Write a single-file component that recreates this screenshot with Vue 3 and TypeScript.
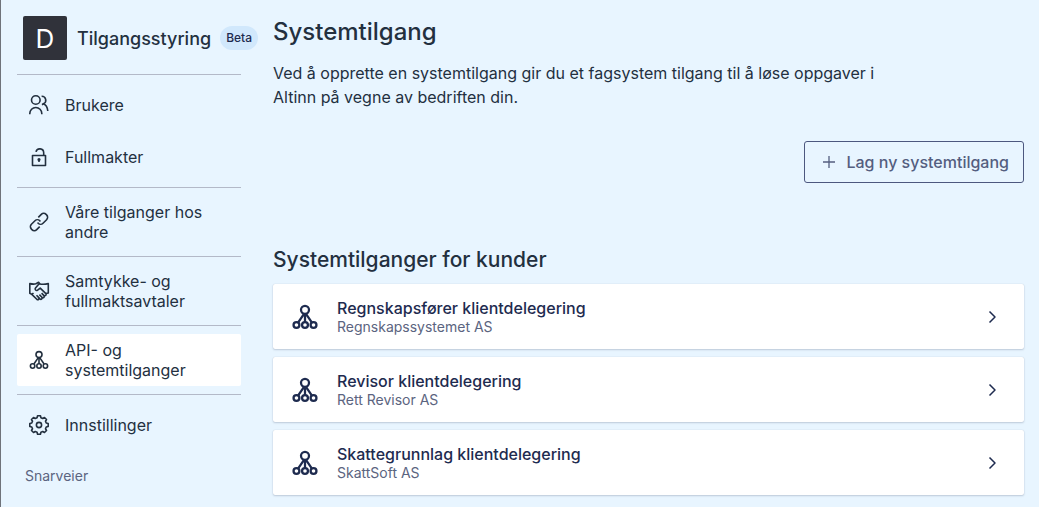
<script setup lang="ts">
interface NavItem {
  label: string
  icon: string
  active?: boolean
}

interface SystemAccess {
  name: string
  vendor: string
}

const navGroups: NavItem[][] = [
  [
    { label: 'Brukere', icon: 'people' },
    { label: 'Fullmakter', icon: 'lock' },
  ],
  [{ label: 'Våre tilganger hos andre', icon: 'link' }],
  [{ label: 'Samtykke- og fullmaktsavtaler', icon: 'handshake' }],
  [{ label: 'API- og systemtilganger', icon: 'system', active: true }],
  [{ label: 'Innstillinger', icon: 'cog' }],
]

const systems: SystemAccess[] = [
  { name: 'Regnskapsfører klientdelegering', vendor: 'Regnskapssystemet AS' },
  { name: 'Revisor klientdelegering', vendor: 'Rett Revisor AS' },
  { name: 'Skattegrunnlag klientdelegering', vendor: 'SkattSoft AS' },
]

// Outline of a gear with eight teeth, centred in a 24 by 24 box
function gearPath(): string {
  const points: string[] = []
  for (let tooth = 0; tooth < 8; tooth++) {
    const steps: [number, number][] = [
      [-15, 7.5],
      [-9, 9.3],
      [9, 9.3],
      [15, 7.5],
    ]
    for (const [offset, radius] of steps) {
      const angle = ((tooth * 45 + offset) * Math.PI) / 180
      points.push(`${(12 + radius * Math.sin(angle)).toFixed(2)} ${(12 - radius * Math.cos(angle)).toFixed(2)}`)
    }
  }
  return `M${points.join('L')}Z`
}

const gear = gearPath()
</script>

<template>
  <div class="page">
    <aside class="sidebar">
      <header class="brand">
        <span class="logo" aria-hidden="true">D</span>
        <span class="brand-name">Tilgangsstyring</span>
        <span class="badge">Beta</span>
      </header>
      <nav aria-label="Tilgangsstyring">
        <ul v-for="(group, index) in navGroups" :key="index" class="group">
          <li v-for="item in group" :key="item.label">
            <a href="#" class="nav-link" :class="{ active: item.active }" :aria-current="item.active ? 'page' : undefined">
              <svg class="icon" viewBox="0 0 24 24" aria-hidden="true">
                <g v-if="item.icon === 'people'">
                  <circle cx="8.8" cy="7" r="4.3" />
                  <path d="M2.8 21.3v-.8a6 6 0 0 1 12 0v.8" />
                  <path d="M14.6 3.2a4 4 0 0 1 1.900 7.600c2.400 1 3.900 3.300 4.300 7.200" />
                  <path d="M16.500 10.800l-1.500.9" />
                </g>
                <g v-else-if="item.icon === 'lock'">
                  <path d="M5.500 10.500h13v10h-13z" />
                  <path d="M9 6.900a3.900 3.900 0 0 1 7.700.8v2.800" />
                  <circle class="solid" cx="12" cy="14.500" r=".8" />
                  <path d="M12 14.500v2.500" />
                </g>
                <g v-else-if="item.icon === 'link'">
                  <path d="M11.300 7.400l3-3a3.400 3.400 0 0 1 4.800 0l.5.500a3.400 3.400 0 0 1 0 4.800l-3.600 3.600a3.400 3.400 0 0 1-4.800 0l-.6-.7" />
                  <path d="M12.700 16.600l-3 3a3.400 3.400 0 0 1-4.800 0l-.5-.5a3.400 3.400 0 0 1 0-4.800l3.600-3.600a3.400 3.400 0 0 1 4.800 0l.6.700" />
                </g>
                <g v-else-if="item.icon === 'handshake'">
                  <path d="M9 4.800c-1.800.5-4 .3-6.200-.2v9.600l2 1.200 5 4.900c1.400 1 2.900-.3 2-1.700l-2.300-2.400" />
                  <path d="M11.800 18.800l1.100 1.200c1.400.9 2.900-.4 2-1.800l-2.500-2.600" />
                  <path d="M15 18.400c1.500.9 2.900-.4 2-1.800l-2.400-2.500" />
                  <path d="M17 16.600c1.500.6 2.700-.7 1.900-2l-5.700-5.500-2.600 2.100c-1.500 1-3.200-.7-2.100-2.200l3.600-4.300c2.900.8 6 .7 9.200-.1v9.300l-2.400.7" />
                  <path d="M4.800 15.400l1.700-1.400M12.900 5l-1.300-1.700L9 4.800" />
                </g>
                <g v-else-if="item.icon === 'system'">
                  <circle cx="12" cy="6.600" r="3" />
                  <circle cx="5.600" cy="18" r="2.200" />
                  <circle cx="12" cy="18" r="2.200" />
                  <circle cx="18.400" cy="18" r="2.200" />
                  <path d="M12 9.600V16M11.300 9.600L6.900 16M12.700 9.600l4.400 6.400" />
                </g>
                <g v-else>
                  <path :d="gear" />
                  <circle cx="12" cy="12" r="2.600" />
                </g>
              </svg>
              <span>{{ item.label }}</span>
            </a>
          </li>
        </ul>
      </nav>
      <h2 class="shortcuts">Snarveier</h2>
    </aside>

    <main class="content">
      <h1>Systemtilgang</h1>
      <p class="intro">
        Ved å opprette en systemtilgang gir du et fagsystem tilgang til å løse oppgaver i Altinn på vegne av
        bedriften din.
      </p>
      <div class="actions">
        <button type="button" class="create">
          <svg class="plus" viewBox="0 0 18 18" aria-hidden="true"><path d="M9 3v12M3 9h12" /></svg>
          Lag ny systemtilgang
        </button>
      </div>
      <h2 class="list-title">Systemtilganger for kunder</h2>
      <ul class="cards">
        <li v-for="system in systems" :key="system.name">
          <a href="#" class="card">
            <svg class="card-icon" viewBox="0 0 24 24" aria-hidden="true">
              <circle cx="12" cy="6.600" r="3" />
              <circle cx="5.600" cy="18" r="2.200" />
              <circle cx="12" cy="18" r="2.200" />
              <circle cx="18.400" cy="18" r="2.200" />
              <path d="M12 9.600V16M11.300 9.600L6.900 16M12.700 9.600l4.400 6.400" />
            </svg>
            <span class="card-text">
              <span class="card-name">{{ system.name }}</span>
              <span class="card-vendor">{{ system.vendor }}</span>
            </span>
            <svg class="chevron" viewBox="0 0 24 24" aria-hidden="true"><path d="M9.500 6.500l5.500 5.500-5.500 5.500" /></svg>
          </a>
        </li>
      </ul>
    </main>
  </div>
</template>

<style>
body {
  margin: 0;
  background: #e8f5ff;
}
</style>

<style scoped>
.page {
  box-sizing: border-box;
  display: flex;
  gap: 32px;
  min-height: 100vh;
  padding: 16px 15px 11px 16px;
  border-left: 1px solid #6f737a;
  background: #e8f5ff;
  color: #23303f;
  font-family: Inter, "Liberation Sans", sans-serif;
  font-size: 16px;
}

ul {
  margin: 0;
  padding: 0;
  list-style: none;
}

svg {
  flex: none;
  fill: none;
  stroke: currentColor;
  stroke-linejoin: round;
  stroke-width: 1.5;
}

a {
  color: inherit;
  text-decoration: none;
}

.sidebar {
  flex: 0 0 224px;
  min-width: 0;
}

.brand {
  display: flex;
  align-items: center;
  height: 44px;
  padding-left: 6px;
  margin-bottom: 14px;
  white-space: nowrap;
}

.logo {
  display: grid;
  flex: none;
  place-items: center;
  width: 44px;
  height: 44px;
  border-radius: 2px;
  background: #30323a;
  color: #fff;
  font-size: 26px;
}

.brand-name {
  margin-left: 10px;
  font-size: 18px;
  font-weight: 500;
}

.badge {
  margin-left: 9px;
  padding: 0 6px;
  border-radius: 12px;
  background: #d1e8fc;
  color: #1e2b4f;
  font-size: 12px;
  font-weight: 500;
  line-height: 24px;
}

.group {
  display: grid;
  gap: 8px;
  padding: 8px 0;
  border-top: 1px solid #b3b9c8;
}

.nav-link {
  box-sizing: border-box;
  display: flex;
  align-items: center;
  gap: 14px;
  min-height: 44px;
  padding: 6px 10px;
  border-radius: 2px;
  line-height: 20px;
}

.nav-link.active {
  background: #fff;
}

.icon {
  width: 24px;
  height: 24px;
  stroke-width: 1.6;
}

.solid {
  fill: currentColor;
}

.shortcuts {
  margin: 10px 8px 0;
  color: #5b6480;
  font-size: 14px;
  font-weight: 400;
  line-height: 22px;
}

.content {
  flex: 1;
  min-width: 0;
}

h1 {
  margin: 0;
  font-size: 24px;
  font-weight: 500;
  line-height: 32px;
}

.intro {
  max-width: 640px;
  margin: 13px 0 0;
  line-height: 24px;
}

.actions {
  display: flex;
  justify-content: flex-end;
  margin-top: 32px;
}

.create {
  display: flex;
  align-items: center;
  gap: 8px;
  height: 42px;
  padding: 0 14px 0 15px;
  border: 1px solid #4d587f;
  border-radius: 3px;
  background: transparent;
  color: #545e80;
  font: inherit;
  font-weight: 500;
}

.plus {
  width: 18px;
  height: 18px;
  stroke-width: 1.3;
}

.list-title {
  margin: 63px 0 10px;
  font-size: 21px;
  font-weight: 500;
  line-height: 28px;
}

.cards {
  display: grid;
  gap: 8px;
}

.card {
  box-sizing: border-box;
  display: flex;
  align-items: center;
  gap: 16px;
  min-height: 65px;
  padding: 12px 20px 12px 16px;
  border-radius: 2px;
  background: #fff;
  box-shadow: 0 1px 2px rgb(30 43 79 / 20%), 0 0 1px rgb(30 43 79 / 20%);
  color: #1e2b4f;
}

.card-icon {
  width: 32px;
  height: 32px;
  stroke-width: 1.7;
}

.card-text {
  flex: 1;
}

.card-name,
.card-vendor {
  display: block;
}

.card-name {
  font-weight: 500;
  line-height: 20px;
}

.card-vendor {
  color: #5b6480;
  font-size: 14px;
  line-height: 18px;
}

.chevron {
  width: 24px;
  height: 24px;
}
</style>
